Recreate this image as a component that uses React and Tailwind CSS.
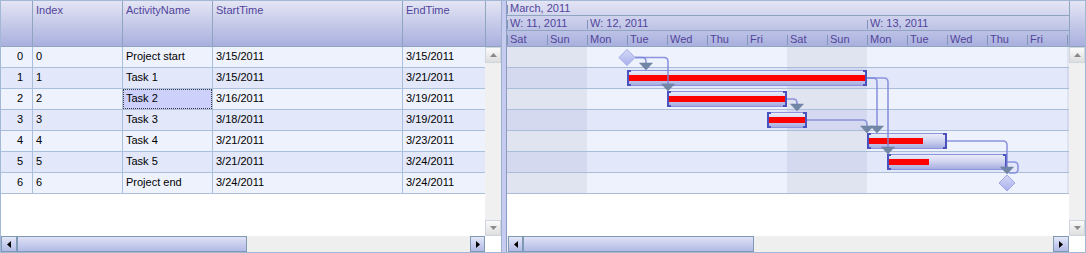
import React from 'react';

const rows = [
  ['0', 'Project start', '3/15/2011', '3/15/2011'],
  ['1', 'Task 1', '3/15/2011', '3/21/2011'],
  ['2', 'Task 2', '3/16/2011', '3/19/2011'],
  ['3', 'Task 3', '3/18/2011', '3/19/2011'],
  ['4', 'Task 4', '3/21/2011', '3/23/2011'],
  ['5', 'Task 5', '3/21/2011', '3/24/2011'],
  ['6', 'Project end', '3/24/2011', '3/24/2011'],
];

const days = ['Sat', 'Sun', 'Mon', 'Tue', 'Wed', 'Thu', 'Fri', 'Sat', 'Sun', 'Mon', 'Tue', 'Wed', 'Thu', 'Fri', ''];
const weekend = [true, true, false, false, false, false, false, true, true, false, false, false, false, false, true];

function HBtn({ dir, w }) {
  return (
    <div className={`${w} h-[16px] shrink-0 border border-[#7f9ab4] bg-linear-to-b from-[#e4e7f8] to-[#b2b9e5] flex items-center justify-center`}>
      <svg width="4" height="7" viewBox="0 0 4 7">
        <path d={dir === 'left' ? 'M4 0L0 3.5L4 7Z' : 'M0 0L4 3.5L0 7Z'} fill="#000" />
      </svg>
    </div>
  );
}

function VBtn({ up }) {
  return (
    <div className="h-[16px] w-full border border-[#cfd5de] bg-linear-to-b from-[#fbfbfb] to-[#dedede] flex items-center justify-center">
      <svg width="7" height="4" viewBox="0 0 7 4">
        <path d={up ? 'M0 4L3.5 0L7 4Z' : 'M0 0L3.5 4L7 0Z'} fill="#8a8a8a" />
      </svg>
    </div>
  );
}

function VScroll() {
  return (
    <div className="w-[16px] shrink-0 flex flex-col">
      <div className="h-[46px] border-l border-b border-[#8fa5bf] bg-linear-to-b from-[#e4e5f4] to-[#a9b0de]" />
      <div className="flex-1 bg-[#f0f0f0] flex flex-col justify-between">
        <VBtn up />
        <VBtn />
      </div>
    </div>
  );
}

function GridPane() {
  const line = 'border-[#a9bfdc]';
  return (
    <div className="w-[500px] shrink-0 h-full flex flex-col">
      <div className="flex h-[235px]">
        <div className="w-[484px] flex flex-col bg-white">
          <div className="h-[46px] flex border-b border-[#8fa5bf] bg-linear-to-b from-[#e4e5f4] to-[#a9b0de] text-[#51459b]">
            <div className="w-[32px] border-r border-[#8fa5bf]" />
            <div className="w-[90px] border-r border-[#8fa5bf] pl-[3px] pt-[3px]">Index</div>
            <div className="w-[90px] border-r border-[#8fa5bf] pl-[3px] pt-[3px]">ActivityName</div>
            <div className="w-[190px] border-r border-[#8fa5bf] pl-[3px] pt-[3px]">StartTime</div>
            <div className="w-[82px] pl-[3px] pt-[3px]">EndTime</div>
          </div>
          {rows.map((r, i) => (
            <div key={i} className={`flex h-[21px] border-b ${line} ${i % 2 === 0 ? 'bg-[#eef2fd]' : 'bg-[#e2e7fa]'}`}>
              <div className={`w-[32px] border-r ${line} flex items-center justify-end pr-[9px] pb-[2px]`}>{r[0]}</div>
              <div className={`w-[90px] border-r ${line} flex items-center pl-[3px] pb-[2px]`}>{r[0]}</div>
              {i === 2 ? (
                <div className={`w-[90px] border-r ${line} flex bg-[#cdd0fb]`}>
                  <div className="flex-1 flex items-center pl-[2px] pb-[1px] border border-dotted border-[#3c3c3c]">{r[1]}</div>
                </div>
              ) : (
                <div className={`w-[90px] border-r ${line} flex items-center pl-[3px] pb-[2px]`}>{r[1]}</div>
              )}
              <div className={`w-[190px] border-r ${line} flex items-center pl-[3px] pb-[2px]`}>{r[2]}</div>
              <div className="w-[82px] flex items-center pl-[3px] pb-[2px]">{r[3]}</div>
            </div>
          ))}
          <div className="flex-1 bg-white" />
        </div>
        <VScroll />
      </div>
      <div className="flex h-[16px] bg-[#efefef]">
        <HBtn dir="left" w="w-[16px]" />
        <div className="w-[230px] h-[16px] border border-[#7f9ab4] bg-linear-to-b from-[#dfe2f6] to-[#b3bae6]" />
        <div className="flex-1" />
        <HBtn dir="right" w="w-[15px]" />
        <div className="w-[16px] bg-white" />
      </div>
    </div>
  );
}

function Tick({ h }) {
  return <span className={`w-px ${h} bg-[#8094b8] self-end mb-[1px] shrink-0`} />;
}

function Bar({ x, y, w, red }) {
  const c = '#4a52bd';
  return (
    <g>
      <rect x={x + 0.5} y={y + 0.5} width={w - 1} height={15} fill="url(#barG)" stroke="#8c93dd" />
      <rect x={x + 1} y={y + 5} width={red} height={6} fill="#ff0000" />
      <path d={`M${x} ${y}h4v2h-2v12h2v2h-4z`} fill={c} />
      <path d={`M${x + w} ${y}h-4v2h2v12h-2v2h4z`} fill={c} />
    </g>
  );
}

function Tri({ cx, top }) {
  return <path d={`M${cx - 6.5} ${top}H${cx + 6.5}L${cx} ${top + 7}Z`} fill="#7286a6" stroke="#687c9c" strokeWidth="0.5" />;
}

function Diamond({ cx, cy }) {
  return (
    <path d={`M${cx} ${cy - 8}L${cx + 8} ${cy}L${cx} ${cy + 8}L${cx - 8} ${cy}Z`} fill="url(#diaG)" stroke="#9ea6e8" />
  );
}

function Chart() {
  const ln = { stroke: '#7c85d8', strokeWidth: 1.6, fill: 'none', opacity: 0.85 };
  return (
    <svg className="absolute left-0 top-0 pointer-events-none overflow-visible" width="562" height="147" viewBox="0 0 562 147">
      <defs>
        <linearGradient id="barG" x1="0" y1="0" x2="0" y2="1">
          <stop offset="0" stopColor="#eceef9" />
          <stop offset="0.45" stopColor="#d3d6f1" />
          <stop offset="1" stopColor="#a3aadf" />
        </linearGradient>
        <linearGradient id="diaG" x1="0" y1="0" x2="0" y2="1">
          <stop offset="0" stopColor="#d6d9f7" />
          <stop offset="1" stopColor="#a8b0ea" />
        </linearGradient>
      </defs>
      <Diamond cx={120} cy={10.5} />
      <Bar x={120} y={23} w={240} red={238} />
      <Bar x={160} y={44} w={120} red={118} />
      <Bar x={260} y={65} w={40} red={38} />
      <Bar x={360} y={86} w={80} red={55} />
      <Bar x={380} y={107} w={120} red={41} />
      <Diamond cx={500} cy={136} />
      <path d="M128 10.5H135Q139 10.5 139 14.5V17" {...ln} />
      <path d="M128 10.5H157Q161 10.5 161 14.5V38" {...ln} />
      <path d="M280 52H286Q290 52 290 56V58" {...ln} />
      <path d="M300 73H356Q360 73 360 77V80" {...ln} />
      <path d="M360 31H366Q370 31 370 35V80" {...ln} />
      <path d="M360 31H377Q381 31 381 35V101" {...ln} />
      <path d="M440 94H496Q500 94 500 98V121" {...ln} />
      <path d="M500 115H507Q511 115 511 119V122Q511 126 507 126H502" {...ln} />
      <Tri cx={139} top={16} />
      <Tri cx={161} top={37} />
      <Tri cx={290} top={57} />
      <Tri cx={360} top={79} />
      <Tri cx={370} top={79} />
      <Tri cx={381} top={100} />
      <Tri cx={500} top={120} />
    </svg>
  );
}

function GanttPane() {
  return (
    <div className="w-[578px] shrink-0 h-full flex flex-col">
      <div className="flex h-[235px]">
        <div className="w-[562px] flex flex-col bg-white overflow-hidden">
          <div className="h-[46px] flex flex-col border-b border-[#8fa5bf] bg-linear-to-b from-[#e4e5f4] to-[#a9b0de] text-[#51459b]">
            <div className="h-[15px] border-b border-[#8fa5bf] flex items-center pt-[1px]">
              <Tick h="h-[9px]" />
              <span className="ml-[2px]">March, 2011</span>
            </div>
            <div className="h-[15px] border-b border-[#8fa5bf] flex pt-[1px]">
              <div className="w-[80px] shrink-0 flex items-center">
                <Tick h="h-[9px]" />
                <span className="ml-[2px]">W: 11, 2011</span>
              </div>
              <div className="w-[280px] shrink-0 flex items-center">
                <Tick h="h-[9px]" />
                <span className="ml-[2px]">W: 12, 2011</span>
              </div>
              <div className="flex-1 flex items-center">
                <Tick h="h-[9px]" />
                <span className="ml-[2px]">W: 13, 2011</span>
              </div>
            </div>
            <div className="h-[15px] flex pt-[2px]">
              {days.map((d, i) => (
                <div key={i} className="w-[40px] shrink-0 flex items-center">
                  <Tick h="h-[10px]" />
                  <span className="ml-[2px]">{d}</span>
                </div>
              ))}
            </div>
          </div>
          <div className="relative h-[147px]">
            {rows.map((r, i) => (
              <div key={i} className="flex h-[21px] border-b border-[#a9bcd8] overflow-hidden">
                {days.map((d, j) => (
                  <div
                    key={j}
                    className={`w-[40px] shrink-0 ${
                      weekend[j]
                        ? i % 2 === 0
                          ? 'bg-[#e0e3f0]'
                          : 'bg-[#d5d9ef]'
                        : i % 2 === 0
                        ? 'bg-[#eef2fd]'
                        : 'bg-[#e2e7fa]'
                    }`}
                  />
                ))}
              </div>
            ))}
            <Chart />
          </div>
          <div className="flex-1 bg-white" />
        </div>
        <VScroll />
      </div>
      <div className="flex h-[16px] bg-[#efefef]">
        <div className="w-px" />
        <HBtn dir="left" w="w-[15px]" />
        <div className="w-[231px] h-[16px] border border-[#7f9ab4] bg-linear-to-b from-[#dfe2f6] to-[#b3bae6]" />
        <div className="flex-1" />
        <HBtn dir="right" w="w-[16px]" />
        <div className="w-[16px] bg-white" />
      </div>
    </div>
  );
}

export default function App() {
  return (
    <div className="w-[1086px] h-[253px] border border-[#a3b8d4] bg-white flex font-['Liberation_Sans',Arial,sans-serif] text-[11px] leading-[13px] text-black overflow-hidden">
      <GridPane />
      <div className="w-[6px] shrink-0 h-full bg-[#c6cbef] border-l border-l-[#9fb0cf] border-r border-r-[#8a9cc2]" />
      <GanttPane />
    </div>
  );
}
